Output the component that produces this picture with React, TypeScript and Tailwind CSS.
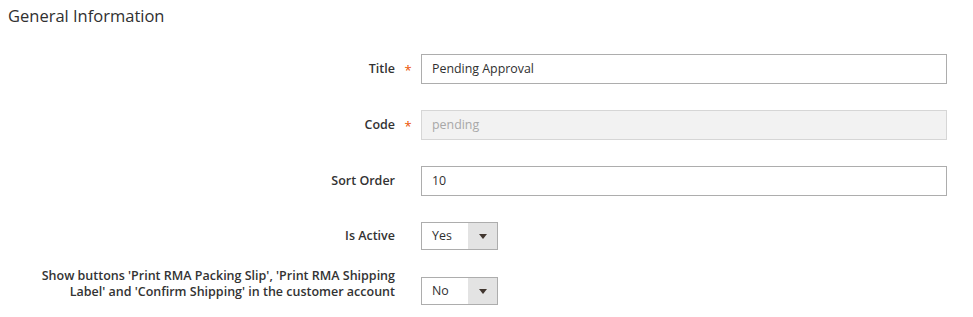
import React from "react";

const font = { fontFamily: '"Open Sans", "Liberation Sans", sans-serif' };

function Star() {
  return <span className="text-[#eb5202] text-[13px] leading-none relative top-[1px]">*</span>;
}

function Arrow() {
  return (
    <div className="w-[29px] h-full bg-[#e3e3e3] flex items-center justify-center">
      <svg width="8" height="5" viewBox="0 0 8 5"><path d="M0 0h8L4 5z" fill="#41362f" /></svg>
    </div>
  );
}

const label = "w-[395px] text-right text-[12.5px] font-semibold text-[#333333]";

export default function App() {
  return (
    <div className="w-[973px] h-[317px] bg-white overflow-hidden text-[#303030]" style={font}>
      <h2 className="pl-[8px] pt-[4px] text-[16.5px] leading-[24px] text-[#303030] font-normal">General Information</h2>
      <div className="flex flex-col mt-[26px]">
        <div className="flex items-center h-[30px]">
          <div className={label}>Title</div>
          <div className="w-[26px] flex justify-center"><Star /></div>
          <div className="w-[526px] h-[30px] border border-[#adadad] flex items-center pl-[10px] text-[12.4px]">Pending Approval</div>
        </div>
        <div className="flex items-center h-[30px] mt-[26px]">
          <div className={label}>Code</div>
          <div className="w-[26px] flex justify-center"><Star /></div>
          <div className="w-[526px] h-[30px] border border-[#d6d6d6] bg-[#f2f2f2] flex items-center pl-[10px] text-[12.4px] text-[#a8a8a8]">pending</div>
        </div>
        <div className="flex items-center h-[30px] mt-[26px]">
          <div className={label}>Sort Order</div>
          <div className="w-[26px]" />
          <div className="w-[526px] h-[30px] border border-[#adadad] flex items-center pl-[10px] text-[12.4px]">10</div>
        </div>
        <div className="flex items-center h-[28px] mt-[26px]">
          <div className={label}>Is Active</div>
          <div className="w-[26px]" />
          <div className="w-[77px] h-[28px] border border-[#adadad] flex items-center text-[12.4px]">
            <span className="flex-1 pl-[10px]">Yes</span>
            <Arrow />
          </div>
        </div>
        <div className="flex items-start mt-[18px]">
          <div className={label + " leading-[16px] pl-[30px]"}>
            Show buttons 'Print RMA Packing Slip', 'Print RMA Shipping Label' and 'Confirm Shipping' in the customer account
          </div>
          <div className="w-[26px]" />
          <div className="w-[77px] h-[28px] mt-[9px] border border-[#adadad] flex items-center text-[12.4px]">
            <span className="flex-1 pl-[10px]">No</span>
            <Arrow />
          </div>
        </div>
      </div>
    </div>
  );
}
